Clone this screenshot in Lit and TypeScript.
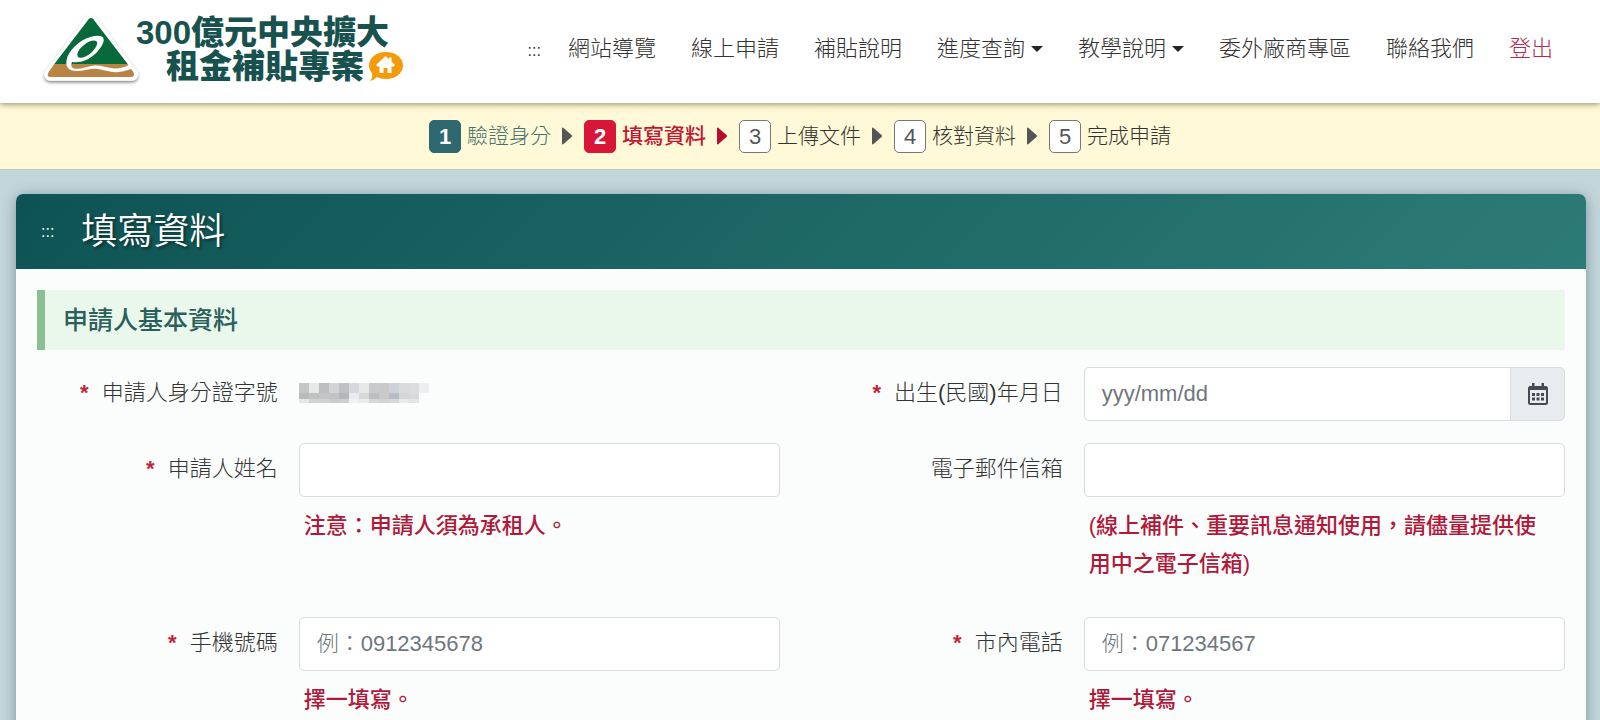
import { LitElement, html, css, svg, nothing } from "lit";
import { customElement, property } from "lit/decorators.js";
import { classMap } from "lit/directives/class-map.js";

interface NavItem {
  text: string;
  menu?: boolean;
  logout?: boolean;
}

const NAV: NavItem[] = [
  { text: "網站導覽" },
  { text: "線上申請" },
  { text: "補貼說明" },
  { text: "進度查詢", menu: true },
  { text: "教學說明", menu: true },
  { text: "委外廠商專區" },
  { text: "聯絡我們" },
  { text: "登出", logout: true },
];

const STEPS = ["驗證身分", "填寫資料", "上傳文件", "核對資料", "完成申請"];

@customElement("site-header")
class SiteHeader extends LitElement {
  static styles = css`
    :host {
      display: block;
      position: relative;
      z-index: 1;
      background: #fff;
      box-shadow: 0 1px 6px rgba(60, 60, 30, 0.6);
    }
    .bar {
      display: flex;
      align-items: center;
      justify-content: space-between;
      height: 103px;
      padding: 0 47px 0 36px;
    }
    .brand {
      display: flex;
      align-items: center;
      text-decoration: none;
      color: #17524f;
    }
    .mark {
      width: 110px;
      height: 84px;
      margin: 0 -10px 6px 0;
    }
    .name {
      display: flex;
      flex-direction: column;
      font-size: 33px;
      font-weight: 900;
      line-height: 34px;
      margin-bottom: 4px;
      white-space: nowrap;
    }
    .second {
      display: flex;
      align-items: center;
      padding-left: 30px;
    }
    .bubble {
      width: 36px;
      height: 32px;
      margin-left: 4px;
    }
    nav {
      display: flex;
      align-items: center;
      margin-bottom: 5px;
    }
    .skip {
      font-size: 16px;
      line-height: 20px;
      margin: 4px 27px 0 0;
      color: #333;
      text-decoration: none;
    }
    ul {
      display: flex;
      gap: 35px;
      margin: 0;
      padding: 0;
      list-style: none;
    }
    .link {
      display: flex;
      align-items: center;
      gap: 6px;
      font-size: 22px;
      line-height: 34px;
      font-weight: 300;
      color: #333;
      text-decoration: none;
      white-space: nowrap;
    }
    .logout {
      color: #b52b50;
    }
    .caret {
      border: 6px solid transparent;
      border-top-color: #222;
      border-bottom: 0;
    }
  `;

  render() {
    return html`
      <div class="bar">
        <a class="brand" href="#">
          <svg class="mark" viewBox="0 0 330 252" aria-hidden="true">
            <defs>
              <filter id="soft" x="-10%" y="-10%" width="120%" height="130%">
                <feDropShadow dx="0" dy="5" stdDeviation="4" flood-color="#333" flood-opacity="0.6" />
              </filter>
            </defs>
            <path
              d="M165 42 L43 203 H288 Z"
              fill="#fff"
              stroke="#fff"
              stroke-width="37"
              stroke-linejoin="round"
              filter="url(#soft)"
            />
            <path d="M158 37 Q165 29 172 37 L275 171 H55 Z" fill="#05693a" />
            <path d="M55 171 H275 L292 195 Q299 210 284 210 H44 Q30 210 38 195 Z" fill="#b78443" />
            <path
              fill="#fff"
              fill-rule="evenodd"
              d="M202 93 C196 82 167 84 140 100 C112 117 92 143 91 166 C90 185 104 194 128 192 C151 190 164 183 186 186 C209 190 228 198 248 195 C263 193 279 187 289 185 L280 173 C263 182 247 186 230 184 C209 181 192 174 171 176 C151 178 136 187 119 185 C105 184 104 175 108 165 C136 170 166 155 186 132 C199 116 206 103 202 93 Z M181 103 C188 108 180 124 165 138 C149 152 131 156 126 149 C120 140 130 124 145 113 C159 102 175 98 181 103 Z"
            />
          </svg>
          <span class="name">
            <span>300億元中央擴大</span>
            <span class="second">
              租金補貼專案
              <svg class="bubble" viewBox="0 0 36 32" aria-hidden="true">
                <path
                  d="M18 1 C28 1 35 7 35 14.500 C35 22 28 28 18 28 C14 28 11 27 9 26 C7 28 5 29 2 30 C4 28 4.500 25 4 22 C2 20 1 17 1 14.500 C1 7 8 1 18 1 Z"
                  fill="#f49b0b"
                />
                <path
                  d="M17.500 5 L8 14 L10 16 L11.500 15 V22 H15.500 V17 H19.500 V22 H23.500 V15 L25 16 L27 14 L23.500 10.500 V6.500 H21 V8.200 Z"
                  fill="#fff"
                />
              </svg>
            </span>
          </span>
        </a>
        <nav aria-label="主選單">
          <a class="skip" href="#">:::</a>
          <ul>
            ${NAV.map(
              (item) => html`<li>
                <a class=${classMap({ link: true, logout: !!item.logout })} href="#"
                  >${item.text}${item.menu ? html`<span class="caret"></span>` : nothing}</a
                >
              </li>`
            )}
          </ul>
        </nav>
      </div>
    `;
  }
}

@customElement("step-bar")
class StepBar extends LitElement {
  @property({ type: Number }) current = 2;

  static styles = css`
    :host {
      display: block;
      background: #fff9d7;
      border-bottom: 1px solid #c4cabb;
    }
    ol {
      display: flex;
      justify-content: center;
      align-items: center;
      gap: 12px;
      height: 66px;
      margin: 0;
      padding: 0;
      list-style: none;
    }
    .step {
      display: flex;
      align-items: center;
      color: #333;
      font-size: 21px;
      font-weight: 300;
      line-height: 32px;
      white-space: nowrap;
    }
    .num {
      box-sizing: border-box;
      width: 32px;
      height: 33px;
      margin-right: 6px;
      border: 1px solid #777;
      border-radius: 5px;
      background: #fff;
      color: #555;
      font-size: 22px;
      font-weight: 400;
      line-height: 31px;
      text-align: center;
    }
    .arrow {
      width: 10px;
      height: 18px;
      margin-left: 11px;
      fill: #555;
    }
    .done {
      color: #47736f;
    }
    .done .num {
      background: #2f6870;
      border-color: #2f6870;
      color: #fff;
      font-weight: 700;
    }
    .now {
      color: #bf1734;
      font-weight: 500;
    }
    .now .num {
      background: #d81638;
      border-color: #d81638;
      color: #fff;
      font-weight: 700;
    }
    .now .arrow {
      fill: #b80d2a;
    }
  `;

  render() {
    return html`<ol>
      ${STEPS.map((text, i) => {
        const n = i + 1;
        return html`<li class=${classMap({ step: true, done: n < this.current, now: n === this.current })}>
          <span class="num">${n}</span>${text}${n < STEPS.length
            ? html`<svg class="arrow" viewBox="0 0 10 18" aria-hidden="true">
                <path d="M0 1.500 Q0 0 1.500 1 L9.500 8 Q10.500 9 9.500 10 L1.500 17 Q0 18 0 16.500 Z" />
              </svg>`
            : nothing}
        </li>`;
      })}
    </ol>`;
  }
}

/* Grey tones of the masked identity number, one list per row of blocks. */
const MASK: string[][] = [
  ["#c4c5c6", "#e8e8e9", "#bcbebf", "#d3d4d5", "#bfc1c3", "#d6d9dc", "#e7e8e8", "#c9cacb", "#cbc9c7", "#ced2d7", "#dadbdd", "#dcddde", "#eeeff0"],
  ["#b9babb", "#c0c1c1", "#c4c5c5", "#c1c3c4", "#b4b6b8", "#e9eaea", "#d7d7d7", "#bdbfc0", "#c9cacb", "#b9bdc1", "#d5d6d7", "#d8d9da"],
  ["#e6e7e7", "#d2d3d4", "#cfd1d2", "#cacccd", "#cdcfd0", "#f0f1f1", "#eaebeb", "#d6d7d8", "#d1d3d4", "#d6d7d8", "#e8e9e9", "#e4e5e6"],
];

@customElement("app-root")
class AppRoot extends LitElement {
  static styles = css`
    :host {
      display: block;
      min-height: 100vh;
      background: #c3d6dc;
      color: #333;
      font-family: "Liberation Sans", "Noto Sans CJK TC", sans-serif;
    }
    main {
      padding: 24px 14px 0 16px;
    }
    .card {
      border-radius: 7px 7px 0 0;
      background: #fbfdfc;
      box-shadow: 0 2px 14px rgba(40, 70, 80, 0.45);
    }
    .head {
      display: flex;
      align-items: center;
      gap: 27px;
      height: 75px;
      padding: 0 25px;
      border-radius: 7px 7px 0 0;
      background: linear-gradient(135deg, #0e5354, #2d7b77);
      color: #fff;
    }
    .skip {
      color: #fff;
      font-size: 16px;
      text-decoration: none;
    }
    h1 {
      margin: 0;
      font-size: 36px;
      font-weight: 350;
      line-height: 48px;
      text-shadow: 2px 2px 3px rgba(0, 0, 0, 0.45);
    }
    .section {
      margin: 21px 21px 17px;
      padding: 0 18px;
      border-left: 8px solid #8bbf91;
      background: #e9f8ea;
      color: #2b5f5d;
      font-size: 25px;
      font-weight: 500;
      line-height: 60px;
    }
    form {
      display: grid;
      grid-template-columns: 1fr 2fr 1fr 2fr;
      row-gap: 22px;
      padding-bottom: 40px;
    }
    .label {
      justify-self: end;
      font-size: 22px;
      font-weight: 300;
      line-height: 52px;
      white-space: nowrap;
    }
    .star {
      margin-right: 13px;
      color: #c41f3b;
      font-weight: 700;
    }
    .field {
      padding: 0 21px;
      min-width: 0;
    }
    .group {
      display: flex;
    }
    input {
      box-sizing: border-box;
      width: 100%;
      min-width: 0;
      height: 54px;
      margin: 0;
      padding: 0 17px;
      border: 1px solid #d9dcdf;
      border-radius: 5px;
      background: #fff;
      color: #333;
      font: 300 22px/34px "Liberation Sans", "Noto Sans CJK TC", sans-serif;
    }
    input::placeholder {
      color: #6f767c;
      opacity: 1;
    }
    .group input {
      border-radius: 5px 0 0 5px;
    }
    .pick {
      display: grid;
      place-items: center;
      box-sizing: border-box;
      flex: none;
      width: 55px;
      margin: 0 0 0 -1px;
      padding: 0;
      border: 1px solid #d9dcdf;
      border-radius: 0 5px 5px 0;
      background: #e9ecef;
    }
    .calendar {
      width: 20px;
      height: 22px;
    }
    .mask {
      display: block;
      width: 130px;
      height: 20px;
      margin-top: 16px;
    }
    .hint {
      margin: 10px 16px 12px 5px;
      color: #b0193a;
      font-size: 22px;
      font-weight: 500;
      line-height: 38px;
    }
  `;

  private label(id: string, text: string, required = true) {
    return html`<label class="label" for=${id}
      >${required ? html`<span class="star">*</span>` : nothing}${text}</label
    >`;
  }

  private text(id: string, placeholder: string, hint: string) {
    return html`<div class="field">
      <input id=${id} type="text" placeholder=${placeholder} />
      <p class="hint">${hint}</p>
    </div>`;
  }

  render() {
    return html`
      <site-header></site-header>
      <step-bar .current=${2}></step-bar>
      <main lang="zh-Hant">
        <section class="card">
          <div class="head">
            <a class="skip" href="#">:::</a>
            <h1>填寫資料</h1>
          </div>
          <h2 class="section">申請人基本資料</h2>
          <form>
            <span class="label"><span class="star">*</span>申請人身分證字號</span>
            <div class="field">
              <svg class="mask" viewBox="0 0 130 20" aria-hidden="true">
                ${MASK.map((row, r) =>
                  row.map(
                    (tone, c) =>
                      svg`<rect x=${c * 10} y=${[0, 10, 16][r]} width="10" height=${[10, 6, 4][r]} fill=${tone} shape-rendering="crispEdges" />`
                  )
                )}
              </svg>
            </div>
            ${this.label("birth", "出生(民國)年月日")}
            <div class="field">
              <div class="group">
                <input id="birth" type="text" placeholder="yyy/mm/dd" />
                <button class="pick" type="button" aria-label="選擇日期">
                  <svg class="calendar" viewBox="0 0 20 22" aria-hidden="true">
                    <path d="M4.500 0 h1.500 v4 h-1.500 z M14 0 h1.500 v4 h-1.500 z" fill="#454b52" stroke="#454b52" />
                    <rect x="1" y="4" width="18" height="17" rx="1.500" fill="none" stroke="#454b52" stroke-width="2" />
                    <path
                      fill="#454b52"
                      d="M1 3.500 h18 v3.500 h-18 z M4 10 h3 v3 h-3 z M8.500 10 h3 v3 h-3 z M13 10 h3 v3 h-3 z M4 14.500 h3 v3 h-3 z M8.500 14.500 h3 v3 h-3 z M13 14.500 h3 v3 h-3 z"
                    />
                  </svg>
                </button>
              </div>
            </div>
            ${this.label("name", "申請人姓名")} ${this.text("name", "", "注意：申請人須為承租人。")}
            ${this.label("mail", "電子郵件信箱", false)}
            ${this.text("mail", "", "(線上補件、重要訊息通知使用，請儘量提供使用中之電子信箱)")}
            ${this.label("mobile", "手機號碼")} ${this.text("mobile", "例：0912345678", "擇一填寫。")}
            ${this.label("phone", "市內電話")} ${this.text("phone", "例：071234567", "擇一填寫。")}
          </form>
        </section>
      </main>
    `;
  }
}
